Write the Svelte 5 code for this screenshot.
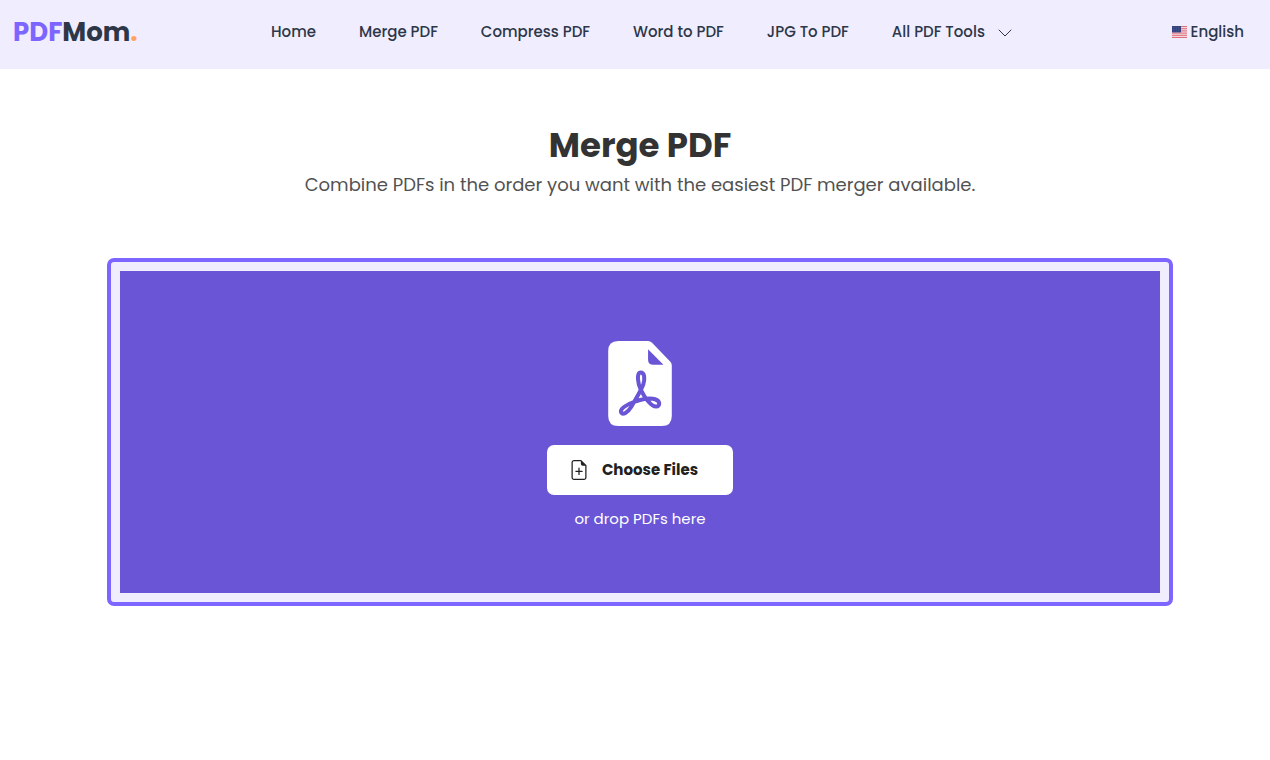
<script>
  const links = [
    { label: 'Home', href: '#home' },
    { label: 'Merge PDF', href: '#merge-pdf' },
    { label: 'Compress PDF', href: '#compress-pdf' },
    { label: 'Word to PDF', href: '#word-to-pdf' },
    { label: 'JPG To PDF', href: '#jpg-to-pdf' }
  ]

  const stripes = [0, 2, 4, 6, 8, 10, 12]

  let picker

  const openPicker = () => picker.click()
</script>

<svelte:head>
  <title>Merge PDF</title>
</svelte:head>

<header>
  <a class="logo" href="#home"><span class="pdf">PDF</span>Mom<span class="dot">.</span></a>
  <nav>
    {#each links as link}
      <a href={link.href}>{link.label}</a>
    {/each}
    <button class="tools">
      All PDF Tools
      <svg width="14" height="14" viewBox="0 0 14 14" aria-hidden="true">
        <path d="M1 5 L7 11 L13 5" fill="none" stroke="currentColor" stroke-linecap="round" stroke-linejoin="round" />
      </svg>
    </button>
  </nav>
  <button class="language">
    <svg width="15" height="12" viewBox="0 0 15 13" preserveAspectRatio="none" aria-hidden="true">
      <rect width="15" height="13" fill="#f4eef2" />
      {#each stripes as y}
        <rect {y} width="15" height="1" fill="#e0626e" />
      {/each}
      <rect width="9" height="7" fill="#34437e" />
      <path d="M1 1.5H8M1 3.5H8M1 5.5H8" stroke="#8d96bb" stroke-width="0.5" stroke-dasharray="0.5 1.2" />
    </svg>
    English
  </button>
</header>

<main>
  <h1>Merge PDF</h1>
  <p class="intro">Combine PDFs in the order you want with the easiest PDF merger available.</p>

  <section class="frame">
    <div class="drop">
      <svg class="file" width="64" height="85" viewBox="0 0 190 254" aria-hidden="true">
        <path d="M30 0H119Q126 0 131 5L185 61Q190 66 190 73V224Q190 254 160 254H30Q0 254 0 224V30Q0 0 30 0Z" fill="#fff" />
        <path d="M119 25L165 71H135Q119 71 119 55Z" fill="#6a55d6" />
        <path
          d="M97 94C109 94 110 113 105 129C100 145 80 178 68 198C58 214 44 222 39 214C34 204 52 190 80 181C100 174 125 169 140 174C156 179 156 195 143 196C128 196 108 168 98 147C88 128 84 94 97 94Z"
          fill="none"
          stroke="#6a55d6"
          stroke-width="12"
          stroke-linejoin="round"
        />
      </svg>
      <button class="choose" on:click={openPicker}>
        <svg width="20" height="20" viewBox="0 0 16 16" fill="none" stroke="currentColor" aria-hidden="true">
          <path d="M9.5 0.5H4A1.5 1.5 0 0 0 2.5 2V14A1.5 1.5 0 0 0 4 15.5H12A1.5 1.5 0 0 0 13.5 14V4.5Z" />
          <path d="M9.5 0.5V3A1.5 1.5 0 0 0 11 4.5H13.5Z" fill="currentColor" stroke="none" />
          <path d="M8 6.5V11.5M5.5 9H10.5" stroke-linecap="round" />
        </svg>
        Choose Files
      </button>
      <input bind:this={picker} type="file" accept="application/pdf" multiple hidden aria-label="Choose Files" />
      <p class="hint">or drop PDFs here</p>
    </div>
  </section>
</main>

<style>
  :global(body) {
    background: #fff;
    font-family: Poppins, Inter, sans-serif;
  }
  header {
    display: flex;
    align-items: center;
    box-sizing: border-box;
    height: 69px;
    padding: 0 26px 5px 13px;
    background: #f0edff;
    color: #2d3748;
  }
  a {
    color: inherit;
    text-decoration: none;
  }
  button {
    display: flex;
    align-items: center;
    padding: 0;
    border: none;
    background: none;
    color: inherit;
    font: inherit;
    cursor: pointer;
  }
  .logo {
    width: 258px;
    font-size: 26px;
    font-weight: 700;
    line-height: 32px;
  }
  .pdf {
    color: #7d66ff;
  }
  .dot {
    color: #ffa45c;
  }
  nav {
    display: flex;
    gap: 43px;
  }
  nav,
  .language {
    font-size: 15px;
    font-weight: 500;
    line-height: 24px;
    white-space: nowrap;
  }
  .tools {
    gap: 13px;
  }
  .language {
    gap: 4px;
    margin-left: auto;
  }
  main {
    padding: 56px 97px 56px 107px;
    text-align: center;
  }
  h1 {
    margin: 0;
    color: #333;
    font-size: 34px;
    font-weight: 700;
    line-height: 40px;
  }
  .intro {
    margin: 4px 0 57px;
    color: #525252;
    font-size: 18px;
    line-height: 32px;
  }
  .frame {
    padding: 9px;
    border: 4px solid #7d66ff;
    border-radius: 7px;
    background: #f0edff;
  }
  .drop {
    display: flex;
    flex-direction: column;
    align-items: center;
    padding: 70px 0 62px;
    background: #6a55d6;
  }
  .choose {
    gap: 13px;
    margin-top: 19px;
    padding: 13px 35px 13px 22px;
    border-radius: 7px;
    background: #fff;
    color: #212121;
    font-size: 15px;
    font-weight: 700;
    line-height: 24px;
  }
  .hint {
    margin: 12px 0 0;
    color: #fff;
    font-size: 15px;
    line-height: 24px;
  }
</style>
